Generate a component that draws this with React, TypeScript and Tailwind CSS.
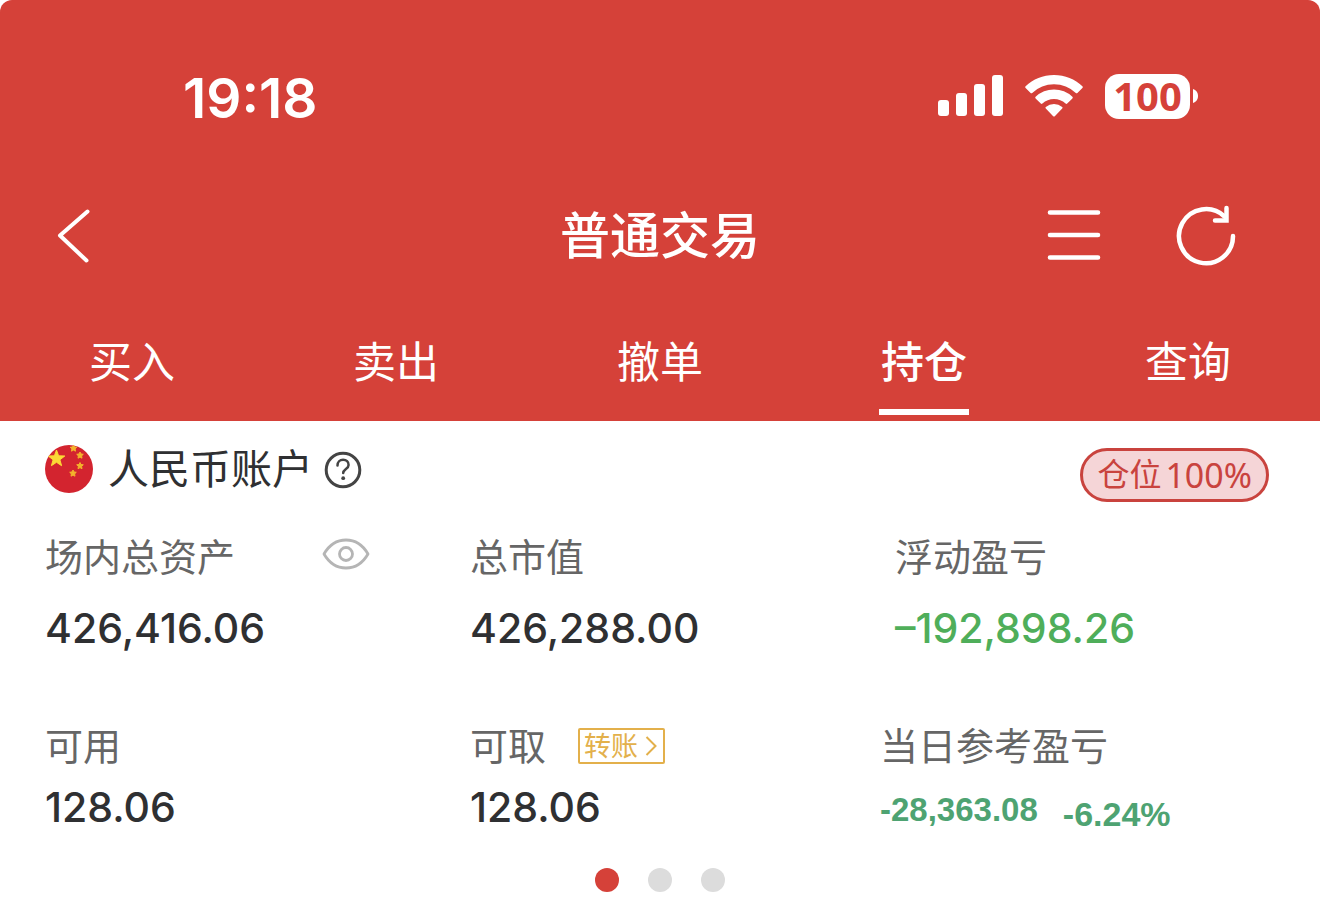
import { FC, ReactNode } from "react";

const tabs = ["买入", "卖出", "撤单", "持仓", "查询"];
const activeTab = "持仓";

const SignalIcon: FC = () => (
  <svg width="65" height="42" viewBox="0 0 65 42" fill="currentColor" aria-hidden="true">
    <rect x="0" y="25" width="11" height="16" rx="3" />
    <rect x="18" y="18" width="11" height="23" rx="3" />
    <rect x="36" y="9" width="11" height="32" rx="3" />
    <rect x="54" y="0" width="11" height="41" rx="3" />
  </svg>
);

const WifiIcon: FC = () => (
  <svg width="58" height="42" viewBox="0 0 58 42" fill="currentColor" aria-hidden="true">
    <path d="M29 0C18 0 8 4.200 .6 11.200a1.200 1.200 0 0 0 0 1.700l5 5a1.200 1.200 0 0 0 1.600 0A32 32 0 0 1 29 9.200a32 32 0 0 1 21.800 8.700 1.200 1.200 0 0 0 1.600 0l5-5a1.200 1.200 0 0 0 0-1.700C50 4.200 40 0 29 0Z" />
    <path d="M29 14.500a27 27 0 0 0-18.400 7.200 1.200 1.200 0 0 0 0 1.700l5.200 5.200a1.200 1.200 0 0 0 1.600 0A17.400 17.400 0 0 1 29 24a17.400 17.400 0 0 1 11.600 4.600 1.200 1.200 0 0 0 1.600 0l5.200-5.200a1.200 1.200 0 0 0 0-1.700A27 27 0 0 0 29 14.500Z" />
    <path d="M29 29a13 13 0 0 0-8.200 3 1.100 1.100 0 0 0 0 1.600l7.400 7.600a1.200 1.200 0 0 0 1.600 0l7.400-7.600a1.100 1.100 0 0 0 0-1.600A13 13 0 0 0 29 29Z" />
  </svg>
);

const Battery: FC = () => (
  <div className="flex items-center gap-[3px]">
    <span className="flex h-[45px] w-[85px] items-center justify-center rounded-[14px] bg-white font-['Open_Sans','Noto_Sans',sans-serif] text-[40px] leading-none font-bold text-[#d54139]">
      100
    </span>
    <svg width="5" height="14" viewBox="0 0 5 14" fill="currentColor" aria-hidden="true">
      <path d="M0 0c3 .8 5 3.600 5 7s-2 6.200-5 7Z" />
    </svg>
  </div>
);

const FlagIcon: FC = () => (
  <svg width="48" height="48" viewBox="0 0 48 48" aria-hidden="true">
    <defs>
      <clipPath id="flag">
        <circle cx="24" cy="24" r="24" />
      </clipPath>
    </defs>
    <g clipPath="url(#flag)">
      <rect width="48" height="48" fill="#d3242f" />
      <path
        fill="#fbd936"
        stroke="#fbd936"
        d="m11.500 5 2.100 5.800 6.200.2-4.900 3.800 1.700 5.900-5.100-3.400-5.100 3.400 1.700-5.900L3.200 11l6.200-.2Z"
      />
      <g fill="#f3b32c" stroke="#f3b32c">
        <path d="m28.500 0 1 2 2.300.3-1.700 1.600.4 2.300-2-1.100-2 1.100.4-2.300-1.700-1.600 2.300-.3Z" />
        <path d="m35 7 1 2 2.300.3-1.700 1.600.4 2.300-2-1.100-2 1.100.4-2.300-1.700-1.600L34 9Z" />
        <path d="m35 17.500 1 2 2.300.3-1.700 1.600.4 2.300-2-1.100-2 1.100.4-2.300-1.700-1.600 2.300-.3Z" />
        <path d="m28 25 1 2 2.300.3-1.700 1.600.4 2.300-2-1.100-2 1.100.4-2.300-1.700-1.600L27 27Z" />
      </g>
    </g>
  </svg>
);

type StatProps = {
  label: string;
  extra?: ReactNode;
  children: ReactNode;
};

const Stat: FC<StatProps> = ({ label, extra, children }) => (
  <div>
    <dt className="flex h-12 items-center text-[38px] leading-none text-[#666]">
      {label}
      {extra}
    </dt>
    {children}
  </div>
);

const App: FC = () => {
  return (
    <div className="w-full bg-white font-[Inter,'Noto_Sans_CJK_SC',sans-serif] text-[#2f3032]">
      <header className="rounded-t-xl bg-[#d54139] text-white">
        <div className="flex h-[196px] items-center justify-between pr-[122px] pl-[183px]">
          <time className="text-[55px] leading-none font-semibold">19:18</time>
          <div className="flex items-center gap-[22px] pb-1">
            <SignalIcon />
            <WifiIcon />
            <Battery />
          </div>
        </div>

        <div className="grid h-20 grid-cols-[1fr_auto_1fr] items-center">
          <div className="flex pl-14">
            <button type="button" aria-label="返回">
              <svg width="36" height="56" viewBox="0 0 36 56" fill="none" stroke="currentColor" strokeWidth="4" strokeLinecap="round" strokeLinejoin="round">
                <path d="M31.500 3.500 4 27.500l26.500 25" />
              </svg>
            </button>
          </div>
          <h1 className="text-[50px] leading-[54px] font-medium">普通交易</h1>
          <div className="flex items-center justify-end gap-[74px] pr-[83px]">
            <button type="button" aria-label="菜单">
              <svg width="54" height="56" viewBox="0 0 54 56" stroke="currentColor" strokeWidth="4.600" strokeLinecap="round">
                <path d="M3 4.500h48M3 27h48M3 49.500h48" />
              </svg>
            </button>
            <button type="button" aria-label="刷新">
              <svg width="62" height="62" viewBox="0 0 62 62" fill="none" stroke="currentColor" strokeWidth="4.500" strokeLinecap="round">
                <path d="M58 31A27 27 0 1 1 49.500 11.500" />
                <path d="M51.500 3v12.500h-11.500" strokeLinejoin="miter" />
              </svg>
            </button>
          </div>
        </div>

        <nav className="grid h-[145px] grid-cols-5 pb-1.5">
          {tabs.map((tab) => (
            <a
              key={tab}
              href="#"
              className={
                tab === activeTab
                  ? "flex flex-col items-center justify-end text-[43px] leading-[48px] font-medium"
                  : "flex flex-col items-center justify-end text-[43px] leading-[48px]"
              }
            >
              {tab}
              <span
                className={
                  tab === activeTab
                    ? "mt-[23px] h-1.5 w-[90px] bg-white"
                    : "mt-[23px] h-1.5 w-[90px]"
                }
              />
            </a>
          ))}
        </nav>
      </header>

      <main className="pt-6 pb-7">
        <div className="flex items-start justify-between pr-[51px] pl-[45px]">
          <div className="flex h-12 items-center">
            <FlagIcon />
            <h2 className="ml-[15px] text-[41px] leading-[44px]">人民币账户</h2>
            <button type="button" aria-label="帮助" className="ml-[11px]">
              <svg width="38" height="40" viewBox="0 -1 38 40" fill="none" stroke="#444" strokeWidth="3" strokeLinecap="round">
                <circle cx="19" cy="20" r="16.800" />
                <path d="M13.500 15.500c0-3.400 2.300-5.700 5.600-5.700s5.500 2.200 5.500 5.100c0 4-5.400 4.200-5.400 8.200" strokeWidth="2.500" />
                <circle cx="19.200" cy="28.200" r="1.900" fill="#444" stroke="none" />
              </svg>
            </button>
          </div>
          <span className="mt-[3px] flex h-[54px] items-center gap-1 rounded-full border-3 border-[#c9433e] bg-[#f5d5d7] px-3.5 text-[32px] leading-none text-[#c9433e]">
            仓位
            <span className="font-['Noto_Sans',sans-serif] text-[34px]">100%</span>
          </span>
        </div>

        <dl className="mt-[31px] grid grid-cols-3 pl-[45px]">
          <Stat
            label="场内总资产"
            extra={
              <button type="button" aria-label="隐藏金额" className="mb-1.5 ml-[87px]">
                <svg width="48" height="34" viewBox="0 0 48 34" fill="none" stroke="#b5b5b5" strokeWidth="2.800">
                  <path d="M2 17C7.500 7.500 15 3 24 3S40.500 7.500 46 17C40.500 26.500 33 31 24 31S7.500 26.500 2 17Z" strokeLinejoin="round" />
                  <circle cx="24" cy="17" r="6.500" />
                </svg>
              </button>
            }
          >
            <dd className="mt-[23px] text-[41px] leading-[48px] font-medium">426,416.06</dd>
          </Stat>
          <Stat label="总市值">
            <dd className="mt-[23px] text-[41px] leading-[48px] font-medium">426,288.00</dd>
          </Stat>
          <Stat label="浮动盈亏">
            <dd className="mt-[23px] text-[41px] leading-[48px] font-medium text-[#4fae5a]">–192,898.26</dd>
          </Stat>
        </dl>

        <dl className="mt-[70px] grid grid-cols-[425fr_410fr_440fr] pl-[45px]">
          <Stat label="可用">
            <dd className="mt-[13px] text-[41px] leading-[48px] font-medium">128.06</dd>
          </Stat>
          <Stat
            label="可取"
            extra={
              <button
                type="button"
                className="ml-8 flex h-9 w-[87px] items-center justify-between rounded-xs border-2 border-[#e3b04b] pr-1.5 pl-1 text-[27px] leading-none text-[#e3b04b]"
              >
                转账
                <svg width="12" height="20" viewBox="0 0 12 20" fill="none" stroke="currentColor" strokeWidth="2">
                  <path d="m1.500 1 9 9-9 9" />
                </svg>
              </button>
            }
          >
            <dd className="mt-[13px] text-[41px] leading-[48px] font-medium">128.06</dd>
          </Stat>
          <Stat label="当日参考盈亏">
            <dd className="mt-[13px] flex items-start gap-[25px] font-['Liberation_Sans',sans-serif] font-bold text-[#4ea372]">
              <span className="text-[33px] leading-[54px]">-28,363.08</span>
              <span className="text-[34px] leading-[62px]">-6.24%</span>
            </dd>
          </Stat>
        </dl>

        <div className="mt-[23px] flex justify-center gap-[29px]">
          <button type="button" aria-label="第1页" className="size-6 rounded-full bg-[#d54139]" />
          <button type="button" aria-label="第2页" className="size-6 rounded-full bg-[#dcdcdc]" />
          <button type="button" aria-label="第3页" className="size-6 rounded-full bg-[#dcdcdc]" />
        </div>
      </main>
    </div>
  );
};

export default App;
